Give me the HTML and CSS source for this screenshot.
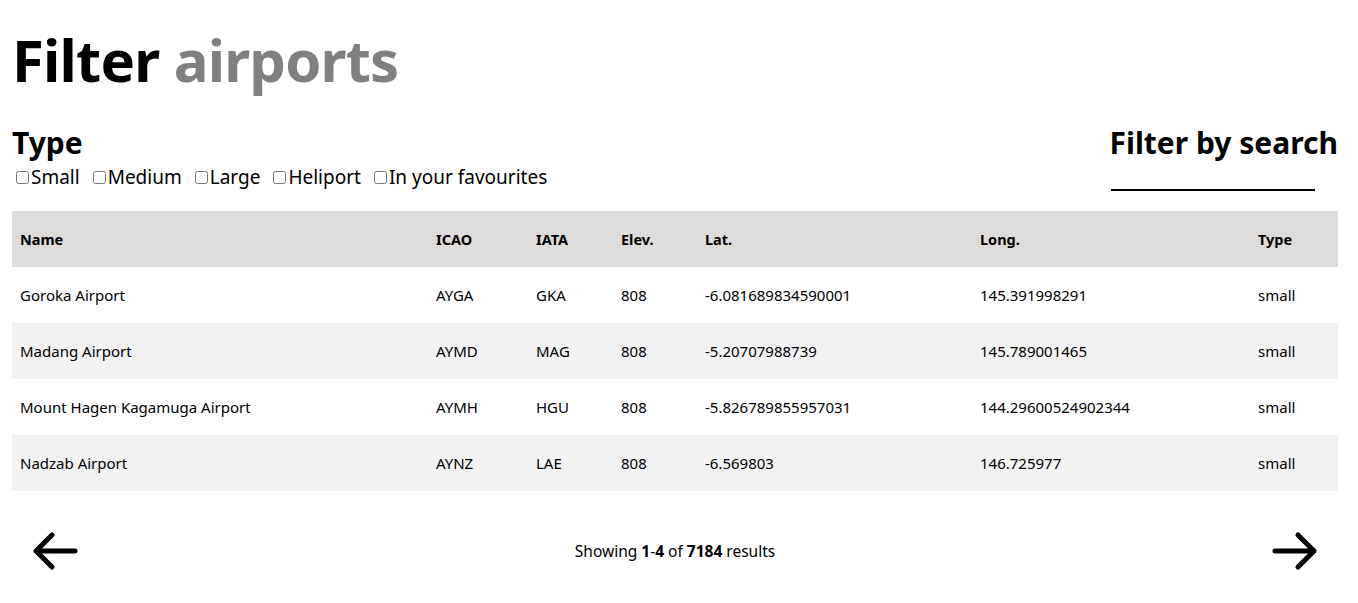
FILE: index.html
```html
<!DOCTYPE html>
<html lang="en">
<head>
<meta charset="utf-8">
<title>Filter airports</title>
<link rel="stylesheet" href="styles.css">
</head>
<body>
<main class="page">
  <h1 class="title">Filter <span class="muted">airports</span></h1>
  <section class="filters">
    <div class="types">
      <h2 class="section-title">Type</h2>
      <div class="checks">
        <label class="check"><input type="checkbox">Small</label>
        <label class="check"><input type="checkbox">Medium</label>
        <label class="check"><input type="checkbox">Large</label>
        <label class="check"><input type="checkbox">Heliport</label>
        <label class="check"><input type="checkbox">In your favourites</label>
      </div>
    </div>
    <div class="search">
      <h2 class="section-title">Filter by search</h2>
      <input class="search-input" type="text" aria-label="Search">
    </div>
  </section>
  <table class="airports">
    <colgroup>
      <col class="c-name"><col class="c-icao"><col class="c-iata"><col class="c-elev"><col class="c-lat"><col class="c-long"><col class="c-type">
    </colgroup>
    <thead>
      <tr><th>Name</th><th>ICAO</th><th>IATA</th><th>Elev.</th><th>Lat.</th><th>Long.</th><th>Type</th></tr>
    </thead>
    <tbody>
      <tr><td>Goroka Airport</td><td>AYGA</td><td>GKA</td><td>808</td><td>-6.081689834590001</td><td>145.391998291</td><td>small</td></tr>
      <tr><td>Madang Airport</td><td>AYMD</td><td>MAG</td><td>808</td><td>-5.20707988739</td><td>145.789001465</td><td>small</td></tr>
      <tr><td>Mount Hagen Kagamuga Airport</td><td>AYMH</td><td>HGU</td><td>808</td><td>-5.826789855957031</td><td>144.29600524902344</td><td>small</td></tr>
      <tr><td>Nadzab Airport</td><td>AYNZ</td><td>LAE</td><td>808</td><td>-6.569803</td><td>146.725977</td><td>small</td></tr>
    </tbody>
  </table>
  <nav class="pager">
    <button class="arrow" aria-label="Previous">
      <svg width="48" height="40" viewBox="0 0 48 40"><path d="M43 20H4M4 20L20 4M4 20L20 36" fill="none" stroke="#000" stroke-width="5" stroke-linecap="round" stroke-linejoin="round"/></svg>
    </button>
    <p class="count">Showing <b>1</b>-<b>4</b> of <b>7184</b> results</p>
    <button class="arrow" aria-label="Next">
      <svg width="48" height="40" viewBox="0 0 48 40"><path d="M5 20H44M44 20L28 4M44 20L28 36" fill="none" stroke="#000" stroke-width="5" stroke-linecap="round" stroke-linejoin="round"/></svg>
    </button>
  </nav>
</main>
</body>
</html>
```

FILE: styles.css
```css
* { box-sizing: border-box; }
html, body { margin: 0; padding: 0; background: #fff; }
body {
  font-family: "Noto Sans", "Open Sans", sans-serif;
  color: #000;
}
.page {
  padding: 0 20px 0 12px;
}
.title {
  margin: 0;
  padding-top: 20px;
  font-size: 58px;
  line-height: 80px;
  font-weight: 700;
  letter-spacing: -0.8px;
}
.muted { color: #808080; }
.filters {
  display: flex;
  justify-content: space-between;
  align-items: flex-start;
  margin-top: 20px;
  height: 91px;
}
.section-title {
  margin: 0;
  padding-top: 5px;
  font-size: 30px;
  line-height: 36px;
  font-weight: 700;
  letter-spacing: 0;
}
.checks {
  display: flex;
  gap: 13px;
  padding-left: 4px;
  margin-top: 3px;
  font-size: 19px;
  line-height: 26px;
}
.check {
  display: flex;
  align-items: center;
}
.check input {
  width: 13px;
  height: 13px;
  margin: 1px 2px 0 0;
}
.search {
  display: flex;
  flex-direction: column;
  align-items: flex-end;
}
.search-input {
  margin-top: 16px;
  margin-right: 23px;
  width: 204px;
  height: 14px;
  border: 0;
  border-bottom: 2px solid #000;
  padding: 0;
  outline: none;
}
.airports {
  width: 100%;
  border-collapse: collapse;
  table-layout: fixed;
  font-size: 15px;
}
.c-name { width: 416px; }
.c-icao { width: 100px; }
.c-iata { width: 85px; }
.c-elev { width: 84px; }
.c-lat { width: 275px; }
.c-long { width: 278px; }
.c-type { width: 88px; }
.airports th, .airports td {
  height: 56px;
  padding: 0 8px;
  text-align: left;
  white-space: nowrap;
}
.airports th {
  background: #dedbdb;
  font-weight: 700;
  font-size: 14.5px;
}
.airports tbody tr:nth-child(even) td { background: #f2f2f2; }
.pager {
  display: flex;
  justify-content: space-between;
  align-items: center;
  margin-top: 40px;
  padding: 0 20px;
}
.arrow {
  background: none;
  border: 0;
  padding: 0;
  display: flex;
}
.count {
  margin: 0;
  font-size: 15.5px;
}
```
